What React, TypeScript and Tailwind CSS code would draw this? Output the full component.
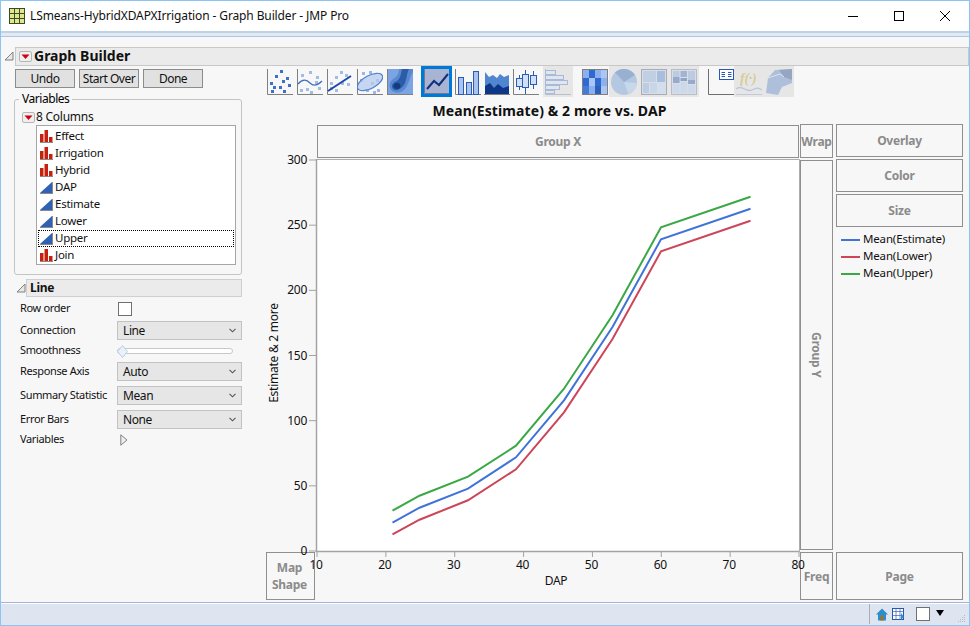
import React from "react";

const F = "font-['Noto_Sans',sans-serif]";

function Tri({ className = "" }: { className?: string }) {
  return (
    <svg width="10" height="10" viewBox="0 0 10 10" className={`shrink-0 ${className}`}>
      <path d="M9 1V9H1Z" fill="#e8e8e8" stroke="#808080" />
    </svg>
  );
}

function RedMenu({ w = 13, h = 11 }: { w?: number; h?: number }) {
  return (
    <svg width={w} height={h} viewBox="0 0 13 11" className="shrink-0">
      <rect x="0.5" y="0.5" width="12" height="10" rx="1.5" fill="#efefef" stroke="#b5b5b5" />
      <path d="M2.5 3.5H10.5L6.5 8Z" fill="#d00018" />
    </svg>
  );
}

const Nominal = () => (
  <svg width="13" height="13" viewBox="0 0 13 13" className="shrink-0">
    <rect x="0" y="4" width="3.5" height="8" fill="#c8200e" />
    <rect x="4.5" y="0" width="3.5" height="12" fill="#c8200e" />
    <rect x="9" y="7" width="3.5" height="5" fill="#c8200e" />
    <path d="M0 12.5H13" stroke="#8a8a8a" />
  </svg>
);

const Continuous = () => (
  <svg width="13" height="13" viewBox="0 0 13 13" className="shrink-0">
    <path d="M0 12L12 1V12Z" fill="#2f62b4" />
    <path d="M0 12.5H13M12.5 1V13" stroke="#8a8a8a" />
  </svg>
);

const Chevron = () => (
  <svg width="7" height="5" viewBox="0 0 7 5" className="shrink-0">
    <path d="M0.5 0.8L3.5 3.8L6.5 0.8" fill="none" stroke="#555" strokeWidth="1.1" />
  </svg>
);

function Select({ value }: { value: string }) {
  return (
    <div className="w-[125px] h-[19px] bg-[#e6e6e6] border border-[#c2c2c2] flex items-center justify-between pl-[5px] pr-[5px] text-[#111] text-[12px] tracking-[-0.4px]">
      <span>{value}</span>
      <Chevron />
    </div>
  );
}

function Zone({ label, className = "" }: { label: React.ReactNode; className?: string }) {
  return (
    <div className={`border border-[#8f8f8f] flex items-center justify-center text-center font-bold text-[#8b8b8b] bg-[#f7f7f7] leading-[17px] ${className}`}>
      {label}
    </div>
  );
}

const Frame = ({ children, bg }: { children: React.ReactNode; bg?: string }) => (
  <svg width="26" height="26" viewBox="0 0 26 26" className="shrink-0" style={bg ? { background: bg } : undefined}>
    {children}
  </svg>
);

const Axes = () => <path d="M0.5 0V25.5H26" fill="none" stroke="#7f7f7f" />;

const Sq = ({ pts, c = "#4f7fcf" }: { pts: number[][]; c?: string }) => (
  <>
    {pts.map(([x, y], i) => (
      <rect key={i} x={x} y={y} width="3" height="3" fill={c} />
    ))}
  </>
);

const Off = ({ children }: { children: React.ReactNode }) => (
  <div className="w-[30px] h-[31px] bg-[#e6e6e6] flex items-center justify-center shrink-0">{children}</div>
);

function Toolbar() {
  return (
    <div className="h-[31px] flex items-center">
      <div className="flex gap-[4px] ml-px">
        <Frame>
          <Axes />
          <Sq pts={[[13, 1], [3, 13], [8, 6], [19, 8], [15, 11], [6, 17], [12, 17], [21, 15], [16, 21], [4, 21]]} c="#3f70c8" />
        </Frame>
        <Frame>
          <Axes />
          <Sq pts={[[12, 2], [4, 5], [19, 7], [9, 19], [18, 12], [3, 20], [13, 22], [21, 18]]} c="#a3bce6" />
          <path d="M1 15C6 9 10 11 13 14S20 17 25 12" fill="none" stroke="#3f6fbe" strokeWidth="1.2" />
        </Frame>
        <Frame>
          <Axes />
          <Sq pts={[[13, 2], [8, 7], [18, 5], [3, 13], [14, 13], [8, 20], [3, 18], [20, 14]]} c="#a3bce6" />
          <path d="M1 22L24 7" fill="none" stroke="#1c46a8" strokeWidth="2" />
        </Frame>
        <Frame>
          <Axes />
          <Sq pts={[[5, 3], [12, 2], [3, 10], [19, 10], [9, 20], [16, 22], [14, 13], [20, 20]]} c="#9db6e2" />
          <ellipse cx="13" cy="13" rx="14" ry="6.5" transform="rotate(-28 13 13)" fill="#b6c9ee" fillOpacity="0.75" stroke="#4d7ed6" strokeWidth="1.2" />
        </Frame>
        <Frame bg="#7ba4e4">
          <path d="M12 0H26V3C23 7 22 15 18 20C14 25 5 25 3 19C1 13 6 10 9 8C11 6 12 3 12 0Z" fill="#5a88d0" />
          <path d="M15 0H22C20 3 20 9 18 14C15 20 9 23 6 20C3 16 7 13 10 12C13 10 14 5 15 0Z" fill="#2b5ca8" />
          <ellipse cx="10" cy="17" rx="3.5" ry="3" fill="#143a80" />
          <path d="M0 25.5H26M0.5 0V26" stroke="#808080" />
        </Frame>
      </div>
      <div className="ml-[8px] w-[31px] h-[31px] border-[3px] border-[#0078d7] bg-[#a8b4d2] flex items-center justify-center shrink-0">
        <svg width="25" height="25" viewBox="0 0 25 25">
          <path d="M0.5 0V24.5H25" fill="none" stroke="#6d7a96" />
          <path d="M3 20L10 12L15 16L24 5" fill="none" stroke="#10307f" strokeWidth="2" />
        </svg>
      </div>
      <div className="flex gap-[3px] ml-[3px]">
        <Frame>
          <Axes />
          <rect x="3.5" y="8.5" width="5" height="17" fill="#a9c4ee" stroke="#2a5bb5" />
          <rect x="11.5" y="13.5" width="5" height="12" fill="#a9c4ee" stroke="#2a5bb5" />
          <rect x="18.5" y="2.5" width="5" height="23" fill="#a9c4ee" stroke="#2a5bb5" />
        </Frame>
        <Frame>
          <path d="M1 3L5 8L9 6L13 9L16 5L20 8L25 6V25H1Z" fill="#4f86cf" />
          <path d="M1 17L6 14L10 19L14 15L19 19L25 17V25H1Z" fill="#0d3588" />
          <path d="M0 25.5H26" stroke="#7f7f7f" />
        </Frame>
        <Frame>
          <Axes />
          <g fill="#cfe0f8" stroke="#2a5bb5">
            <path d="M6.5 6V21M12.5 1V25M20.5 2V20" fill="none" />
            <rect x="3.5" y="9.5" width="6" height="8" />
            <rect x="9.5" y="5.5" width="6" height="13" />
            <rect x="17.5" y="6.5" width="6" height="9" />
          </g>
        </Frame>
        <div className="w-[1px]" />
      </div>
      <Off>
        <svg width="26" height="26" viewBox="0 0 26 26">
          <path d="M0.5 0V25.5H26" fill="none" stroke="#b8c0cc" />
          <g fill="#dfe6f0" stroke="#a9bad6">
            <rect x="0.5" y="1.5" width="10" height="4" />
            <rect x="0.5" y="6.5" width="18" height="4" />
            <rect x="0.5" y="11.5" width="22" height="4" />
            <rect x="0.5" y="16.5" width="14" height="4" />
            <rect x="0.5" y="21.5" width="9" height="3" />
          </g>
        </svg>
      </Off>
      <div className="ml-[9px] flex items-center">
        <svg width="26" height="26" viewBox="0 0 26 26" className="shrink-0 mr-px">
          <rect width="26" height="26" fill="#808080" />
          <rect x="1" y="1" width="6" height="8" fill="#8cb0ee" />
          <rect x="7" y="1" width="6" height="8" fill="#2f6ad0" />
          <rect x="13" y="1" width="6" height="8" fill="#8cb0ee" />
          <rect x="19" y="1" width="6" height="8" fill="#a9c6f6" />
          <rect x="1" y="9" width="6" height="8" fill="#2f6ad0" />
          <rect x="7" y="9" width="6" height="8" fill="#a9c6f6" />
          <rect x="13" y="9" width="6" height="8" fill="#2f6ad0" />
          <rect x="19" y="9" width="6" height="8" fill="#8cb0ee" />
          <rect x="1" y="17" width="6" height="8" fill="#3f7cdc" />
          <rect x="7" y="17" width="6" height="8" fill="#8cb0ee" />
          <rect x="13" y="17" width="6" height="8" fill="#2e60b8" />
          <rect x="19" y="17" width="6" height="8" fill="#a9c6f6" />
        </svg>
        <Off>
          <svg width="26" height="26" viewBox="0 0 26 26">
            <circle cx="13" cy="13" r="13" fill="#b4c8e2" />
            <path d="M13 13L4 3.5A13 13 0 0 1 24 6Z" fill="#98b0d2" />
            <path d="M13 13L26 14A13 13 0 0 1 17.5 25Z" fill="#c8d8ec" />
          </svg>
        </Off>
        <Off>
          <svg width="26" height="26" viewBox="0 0 26 26">
            <rect x="0.5" y="0.5" width="25" height="25" fill="#d8dde6" stroke="#a8adb5" />
            <rect x="2" y="2" width="13" height="11" fill="#c0cfe4" />
            <rect x="16" y="2" width="8" height="11" fill="#a8bedf" />
            <rect x="2" y="14" width="6" height="10" fill="#bccce2" />
            <rect x="9" y="14" width="7" height="10" fill="#c8d6ea" />
            <rect x="17" y="14" width="7" height="10" fill="#d2dded" />
          </svg>
        </Off>
        <Off>
          <svg width="26" height="26" viewBox="0 0 26 26">
            <rect x="0.5" y="0.5" width="25" height="25" fill="#d8dde6" stroke="#b8bcc4" />
            <rect x="2" y="2" width="6.5" height="12" fill="#bccbe2" />
            <rect x="2" y="8" width="6.5" height="6" fill="#98aacc" />
            <rect x="9.5" y="2" width="6.5" height="6" fill="#a2b4d4" />
            <rect x="9.5" y="9" width="6.5" height="3" fill="#8ea4c8" />
            <rect x="9.5" y="13" width="6.5" height="11" fill="#ccd9ea" />
            <rect x="17" y="2" width="7" height="9" fill="#bccbe2" />
            <rect x="17" y="11" width="7" height="4" fill="#98aacc" />
            <rect x="17" y="16" width="7" height="8" fill="#ccd9ea" />
            <rect x="2" y="15" width="6.5" height="9" fill="#ccd9ea" />
          </svg>
        </Off>
        <div className="w-[9px]" />
        <svg width="26" height="26" viewBox="0 0 26 26" className="shrink-0">
          <path d="M0.5 0V25.5H26" fill="none" stroke="#6f6f6f" />
          <rect x="11.5" y="0.5" width="14" height="10" fill="#fff" stroke="#2a56b8" />
          <path d="M13.5 3.5H17M13.5 5.5H17M13.5 7.5H17M20 3.5H23.5M20 5.5H23.5M20 7.5H23.5" stroke="#2a56b8" />
        </svg>
        <Off>
          <svg width="26" height="26" viewBox="0 0 26 26">
            <text x="4" y="14" fontSize="14" fontStyle="italic" fontWeight="700" fontFamily="'Liberation Serif',serif" fill="#d6cd9a">f(·)</text>
            <path d="M0 20C6 15 10 24 16 21S22 19 26 21" fill="none" stroke="#b8c6dc" strokeWidth="1.3" />
            <path d="M0 25.5H26" stroke="#c2cad6" />
          </svg>
        </Off>
        <Off>
          <svg width="26" height="26" viewBox="0 0 26 26">
            <path d="M9 1L26 0V14L16 18L12 26L0 24L2 9Z" fill="#aebfdb" />
            <path d="M13 1L26 0V11L18 8Z" fill="#94a6c2" />
            <path d="M2 9L14 5L18 8" fill="none" stroke="#dbe2ee" />
          </svg>
        </Off>
      </div>
    </div>
  );
}

const xs = [392.5, 419.5, 468, 516, 564, 612.5, 661, 750.5];
const toPts = (ys: number[]) => ys.map((y, i) => `${xs[i]},${y}`).join(" ");
const upper = [510.7, 495.7, 476.7, 445.7, 388.7, 315.3, 227.3, 196.7];
const est = [522.7, 507.7, 488.7, 457.3, 400.3, 327, 239.3, 208.7];
const lower = [534.3, 519.7, 500.3, 469.3, 412.3, 339, 251.3, 220.7];

function Plot() {
  const yt = [0, 50, 100, 150, 200, 250, 300];
  const xt = [10, 20, 30, 40, 50, 60, 70, 80];
  return (
    <svg viewBox="317 160 483 392" className="block w-[483px] h-[392px] overflow-visible relative z-10" fontFamily="'Noto Sans',sans-serif" fontSize="12">
      <rect x="317" y="160" width="482" height="391" fill="#fff" />
      <path d="M317 159.5H799.5V552" fill="none" stroke="#adadad" />
      <path d="M316.5 159V551.5H799" fill="none" stroke="#a3a3a3" strokeWidth="1.5" />
      {yt.map((v) => {
        const y = 551 - v * 1.3033;
        return (
          <g key={v}>
            <path d={`M309 ${y}H316`} stroke="#a3a3a3" />
            <text x="307" y={y + 4} textAnchor="end" fill="#111">{v}</text>
          </g>
        );
      })}
      {xt.map((v) => {
        const x = 317 + (v - 10) * 6.886;
        return (
          <g key={v}>
            <path d={`M${x} 552V557`} stroke="#a3a3a3" />
            <text x={x - 1} y="569" textAnchor="middle" fill="#111">{v}</text>
          </g>
        );
      })}
      <text x="556" y="585" textAnchor="middle" fill="#111">DAP</text>
      <text transform="translate(278 353) rotate(-90)" textAnchor="middle" fill="#111">Estimate &amp; 2 more</text>
      <polyline points={toPts(upper)} fill="none" stroke="#3aa845" strokeWidth="2" />
      <polyline points={toPts(est)} fill="none" stroke="#3f73d9" strokeWidth="2" />
      <polyline points={toPts(lower)} fill="none" stroke="#cc4558" strokeWidth="2" />
    </svg>
  );
}

const columns: [string, boolean][] = [
  ["Effect", true],
  ["Irrigation", true],
  ["Hybrid", true],
  ["DAP", false],
  ["Estimate", false],
  ["Lower", false],
  ["Upper", false],
  ["Join", true],
];

const labelCls = "text-[11px] tracking-[-0.35px] whitespace-nowrap pb-[2px]";

function LeftPanel() {
  return (
    <div className="w-[266px] shrink-0">
      <div className="flex gap-[4px] ml-[15px] mt-[3px]">
        {["Undo", "Start Over", "Done"].map((b) => (
          <div key={b} className="w-[60px] h-[19px] bg-[#e1e1e1] border border-[#8c8c8c] flex items-center justify-center whitespace-nowrap text-[#111] tracking-[-0.5px]">
            {b}
          </div>
        ))}
      </div>
      <fieldset className="ml-[14px] mt-[3px] w-[228px] h-[184px] border border-[#c4c4c4] rounded-[3px] pl-[7px] pr-[6px] min-w-0">
        <legend className="-ml-[3px] px-[3px] leading-[16px] tracking-[-0.45px]">Variables</legend>
        <div className="flex items-center h-[16px] mt-[2px] text-[#111]">
          <RedMenu />
          <span className="ml-px">8 Columns</span>
        </div>
        <div className="ml-[14px] w-[200px] h-[140px] border border-[#a6a6a6] bg-white pt-[2px] pl-[1px] pr-px">
          {columns.map(([n, nom]) => (
            <div key={n} className={`h-[17px] flex items-center gap-[2px] pl-[1px] text-[#111] text-[11.5px] ${n === "Upper" ? "border border-dotted border-black" : "border border-transparent"}`}>
              {nom ? <Nominal /> : <Continuous />}
              <span className="pb-[2px]">{n}</span>
            </div>
          ))}
        </div>
      </fieldset>
      <div className="flex items-center mt-[4px] ml-[16px]">
        <Tri />
        <div className="w-[216px] h-[18px] bg-[#ebebeb] border border-[#cfcfcf] flex items-center pl-[3px] font-bold text-[#111]">Line</div>
      </div>
      <div className="ml-[20px] mt-[2px] w-[222px] text-[#111]">
        <div className="h-[19px] flex items-center">
          <span className={`w-[98px] ${labelCls}`}>Row order</span>
          <div className="w-[14px] h-[14px] bg-white border border-[#707070]" />
        </div>
        <div className="h-[21px] mt-[2px] flex items-center justify-between"><span className={labelCls}>Connection</span><Select value="Line" /></div>
        <div className="h-[20px] flex items-center">
          <span className={`w-[97px] ${labelCls}`}>Smoothness</span>
          <div className="relative w-[116px] h-[6px] bg-white border border-[#c9c9c9] rounded-[3px]">
            <svg width="11" height="13" viewBox="0 0 11 13" className="absolute -left-px -top-[4px]">
              <path d="M5.5 0.5L10.5 6.5L5.5 12.5L0.5 6.5Z" fill="#eaf1fa" stroke="#b9cbe0" />
            </svg>
          </div>
        </div>
        <div className="h-[21px] flex items-center justify-between"><span className={labelCls}>Response Axis</span><Select value="Auto" /></div>
        <div className="h-[21px] mt-[3px] flex items-center justify-between"><span className={labelCls}>Summary Statistic</span><Select value="Mean" /></div>
        <div className="h-[21px] mt-[3px] flex items-center justify-between"><span className={labelCls}>Error Bars</span><Select value="None" /></div>
        <div className="h-[20px] flex items-center">
          <span className={`w-[100px] ${labelCls}`}>Variables</span>
          <svg width="8" height="12" viewBox="0 0 8 12"><path d="M0.8 0.8L7 6L0.8 11.2Z" fill="#eee" stroke="#808080" /></svg>
        </div>
      </div>
    </div>
  );
}

function LegendRow({ color, label }: { color: string; label: string }) {
  return (
    <div className="h-[17px] flex items-center gap-[3px]">
      <div className="w-[19px] h-[2px]" style={{ background: color }} />
      <span className="text-[#111] text-[11.5px] tracking-[-0.15px] pb-[2px]">{label}</span>
    </div>
  );
}

function GraphArea() {
  return (
    <div className="flex-1 min-w-0">
      <Toolbar />
      <div className="w-[567px] h-[27px] flex items-center justify-center text-[14px] font-bold text-[#111] tracking-[0.1px]">
        Mean(Estimate) &amp; 2 more vs. DAP
      </div>
      <div className="grid grid-cols-[51px_483px_34px_129px] grid-rows-[36px_392px_48px]">
        <div />
        <Zone label="Group X" className="mt-px h-[33px] w-[482px]" />
        <Zone label="Wrap" className="w-[33px] h-[34px]" />
        <Zone label="Overlay" className="ml-[2px] w-[127px] h-[33px]" />
        <div />
        <Plot />
        <Zone label={<span className="[writing-mode:vertical-rl]">Group Y</span>} className="w-[33px] h-[390px]" />
        <div className="ml-[2px] w-[127px] -mt-px">
          <Zone label="Color" className="h-[33px]" />
          <Zone label="Size" className="h-[33px] mt-[2px]" />
          <div className="mt-[4px] pl-[5px]">
            <LegendRow color="#3f73d9" label="Mean(Estimate)" />
            <LegendRow color="#cc4558" label="Mean(Lower)" />
            <LegendRow color="#3aa845" label="Mean(Upper)" />
          </div>
        </div>
        <Zone label={<>Map<br />Shape</>} className="w-[49px] h-[48px] pr-[2px]" />
        <div />
        <Zone label="Freq" className="w-[33px] h-[48px]" />
        <Zone label="Page" className="ml-[2px] w-[127px] h-[48px]" />
      </div>
    </div>
  );
}

export default function App() {
  return (
    <div className={`w-[970px] h-[626px] border border-[#8cc4f4] bg-[#f7f7f7] flex flex-col text-[12px] leading-[16px] tracking-[-0.25px] overflow-hidden ${F}`}>
      <div className="h-[30px] bg-white flex items-center shrink-0">
        <svg width="16" height="16" viewBox="0 0 16 16" className="ml-[8px] shrink-0">
          <rect x="0.5" y="0.5" width="15" height="15" fill="#dfe88a" stroke="#3c4a2c" />
          <path d="M5.5 0V16M10.5 0V16M0 5.5H16M0 10.5H16" stroke="#3c4a2c" />
        </svg>
        <span className="ml-[5px] text-[#111] tracking-[-0.12px]">LSmeans-HybridXDAPXIrrigation - Graph Builder - JMP Pro</span>
        <div className="ml-auto flex items-center">
          <svg width="46" height="12" viewBox="0 0 46 12"><path d="M18 6.5H28" stroke="#000" /></svg>
          <svg width="46" height="12" viewBox="0 0 46 12"><rect x="18.5" y="1.5" width="9" height="9" fill="none" stroke="#000" /></svg>
          <svg width="46" height="12" viewBox="0 0 46 12" className="mr-[1px]"><path d="M18 1L28 11M28 1L18 11" stroke="#000" /></svg>
        </div>
      </div>
      <div className="h-[6px] shrink-0 bg-[#e2e9f2] border-t-2 border-b border-t-[#c0d3e6] border-b-[#a8c8e8]" />
      <div className="flex items-center h-[20px] mt-[9px] ml-[3px] shrink-0">
        <Tri />
        <div className="ml-[1px] flex-1 h-[19px] bg-[#ebebeb] border border-[#c8c8c8] flex items-center pl-[3px]">
          <RedMenu />
          <span className="ml-[2px] text-[14px] font-bold text-[#111] tracking-[0px]">Graph Builder</span>
        </div>
      </div>
      <div className="flex flex-1 min-h-0 -ml-px">
        <LeftPanel />
        <GraphArea />
      </div>
      <div className="h-[23px] shrink-0 bg-[#dfe5f0] border-t border-[#a5b4dc] shadow-[inset_0_1px_0_#fff] flex items-center justify-end">
        <div className="w-px h-[20px] bg-[#a8aeb8] mr-[6px]" />
        <svg width="12" height="13" viewBox="0 0 12 13" className="shrink-0">
          <path d="M6 0.5L0 6.5H2V12.5H10V6.5H12Z" fill="#2a8ed0" />
          <rect x="4.5" y="7.5" width="3" height="5" fill="#a87018" />
        </svg>
        <svg width="12" height="12" viewBox="0 0 12 12" className="ml-[4px] shrink-0">
          <rect x="0.5" y="0.5" width="11" height="11" fill="#fff" stroke="#2a56a8" />
          <path d="M0 3.5H12M4 0V12M8 0V12M0 7.5H12" stroke="#3a60b0" strokeWidth="0.7" />
          <path d="M9 5L12 9L9 12Z" fill="#2a8ed0" />
        </svg>
        <div className="ml-[12px] w-[14px] h-[14px] bg-white border border-[#707070]" />
        <svg width="8" height="6" viewBox="0 0 8 6" className="ml-[6px] -mt-[3px] shrink-0"><path d="M0 0H8L4 6Z" fill="#000" /></svg>
        <svg width="9" height="9" viewBox="0 0 9 9" className="ml-[13px] mr-[3px] mt-[8px] shrink-0" fill="#b4bac6">
          <rect x="7" y="1" width="1" height="1" /><rect x="5" y="3" width="1" height="1" /><rect x="7" y="3" width="1" height="1" />
          <rect x="3" y="5" width="1" height="1" /><rect x="5" y="5" width="1" height="1" /><rect x="7" y="5" width="1" height="1" />
          <rect x="1" y="7" width="1" height="1" /><rect x="3" y="7" width="1" height="1" /><rect x="5" y="7" width="1" height="1" /><rect x="7" y="7" width="1" height="1" />
        </svg>
      </div>
    </div>
  );
}
